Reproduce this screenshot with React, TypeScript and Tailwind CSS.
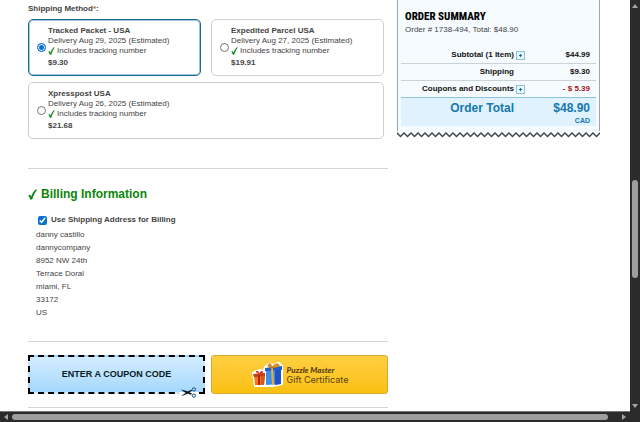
import React, { useState } from 'react';

const SHIPPING_METHODS = [
  { id: 'tracked', name: 'Tracked Packet - USA', delivery: 'Delivery Aug 29, 2025 (Estimated)', price: '$9.30', wide: false },
  { id: 'expedited', name: 'Expedited Parcel USA', delivery: 'Delivery Aug 27, 2025 (Estimated)', price: '$19.91', wide: false },
  { id: 'xpresspost', name: 'Xpresspost USA', delivery: 'Delivery Aug 26, 2025 (Estimated)', price: '$21.68', wide: true },
];

const ADDRESS = ['danny castillo', 'dannycompany', '8952 NW 24th', 'Terrace Doral', 'miami, FL', '33172', 'US'];

const SUMMARY_ROWS = [
  { label: 'Subtotal (1 Item)', value: '$44.99', details: true, discount: false },
  { label: 'Shipping', value: '$9.30', details: false, discount: false },
  { label: 'Coupons and Discounts', value: '- $ 5.39', details: true, discount: true },
];

const Tick: React.FC<{ className: string }> = ({ className }) => (
  <svg viewBox="0 0 10 12" className={className} fill="currentColor" aria-hidden="true">
    <path d="M0.2 7.2 2 6 3.6 8.2C4.8 5 6.6 2 8.6 0.2L10 0.6C7.8 3.6 5.9 7.3 4.6 11.6H2.5C2.1 9.9 1.3 8.4 0.2 7.2Z" />
  </svg>
);

const Scissors: React.FC = () => (
  <svg viewBox="0 0 20 11" className="absolute -bottom-1.5 right-1 h-[11px] w-5" fill="none" aria-hidden="true">
    <path d="M0 5h20v2H0z" fill="#fff" />
    <path d="M2 2.4C6 3 9.5 4.7 13 6.6L12 7.7C8 6.5 4.5 5 2 2.4Z" fill="#0b1a26" />
    <path d="M2 9C6 8.4 9.5 6.5 13.2 3.6L12.2 2.8C8.3 5 4.8 7 2 9Z" fill="#0b1a26" />
    <ellipse cx="14.9" cy="2.4" rx="1.7" ry="1.6" stroke="#1c5277" />
    <ellipse cx="14.9" cy="8.6" rx="1.7" ry="1.6" stroke="#1c5277" />
  </svg>
);

const Gifts: React.FC = () => (
  <svg viewBox="0 0 32 26" className="h-[26px] w-8" aria-hidden="true">
    <path d="M2 11 6 9 9 8 13 9 14 5 18 2 23 3 28 1 31 4 31 22 22 24 14 24 4 24Z" fill="#fff" stroke="#fff" strokeWidth="2" strokeLinejoin="round" />
    <path d="M3 13 14 12 13 23 4 23Z" fill="#ef7a1f" />
    <path d="M2 12 14 11 14 14 3 15Z" fill="#c93d12" />
    <path d="M10 14 14 14 13 23 10 23Z" fill="#d65a17" />
    <path d="M7 13 9 13 9 23 7 23Z" fill="#b91f16" />
    <path d="M8 12C5 11 4 9 6 9S8 11 8 12C9 9 12 8 12 10S9 12 8 12Z" fill="#d52b1a" />
    <path d="M15 7 30 5 30 22 15 23Z" fill="#3c8fe8" />
    <path d="M24 6 30 5 30 22 24 23Z" fill="#2350c5" />
    <path d="M14 6 31 4 31 8 14 9Z" fill="#1f5fcb" />
    <path d="M20 6 22 6 23 23 21 23Z" fill="#f1ad2c" />
    <path d="M21 6C17 6 16 3 18 2S21 4 21 6C22 2 27 1 28 3S24 6 21 6Z" fill="#d99522" stroke="#a8651b" strokeWidth="0.6" />
  </svg>
);

const ShippingMethods: React.FC = () => {
  const [selected, setSelected] = useState('tracked');

  return (
    <fieldset className="mr-1">
      <legend className="pt-1 pb-[5px] text-[8px] leading-[10px] font-bold text-[#444]">
        Shipping Method<span className="text-[#b5651d]">*</span>:
      </legend>
      <div className="grid grid-cols-2 gap-x-2.5 gap-y-1.5">
        {SHIPPING_METHODS.map((method) => (
          <label
            key={method.id}
            className={`flex items-center gap-0.5 rounded-[5px] border py-1.5 pl-2 ${method.wide ? 'col-span-2' : ''} ${
              selected === method.id ? 'border-[#1a6b96] ring-1 ring-inset ring-[#1a6b96]/40' : 'border-[#cfcfcf]'
            }`}
          >
            <input
              type="radio"
              name="shipping"
              checked={selected === method.id}
              onChange={() => setSelected(method.id)}
              className="size-[9px] shrink-0 appearance-none rounded-full border border-[#767676] bg-white checked:border-[#0b72d0] checked:bg-[#0b72d0] checked:shadow-[inset_0_0_0_1px_#fff]"
            />
            <span className="flex flex-col text-[8px] leading-[10px] text-[#444]">
              <span className="font-bold">{method.name}</span>
              <span>{method.delivery}</span>
              <span className="flex items-center gap-0.5">
                <Tick className="h-2 w-[7px] text-[#118a1d]" />
                Includes tracking number
              </span>
              <span className="leading-[13px] font-bold">{method.price}</span>
            </span>
          </label>
        ))}
      </div>
    </fieldset>
  );
};

const BillingInformation: React.FC = () => (
  <section className="mt-[29px] border-t border-[#d5d5d5] pt-[17px]">
    <h2 className="flex items-center gap-1 text-[12px] leading-4 font-bold text-[#0b850b]">
      <Tick className="h-[11px] w-[9px]" />
      Billing Information
    </h2>
    <div className="mt-3 pl-2 text-[#444]">
      <label className="flex items-center gap-1 pl-0.5 text-[8px] leading-3 font-bold">
        <input type="checkbox" defaultChecked className="size-[9px] accent-[#0b72d0]" />
        Use Shipping Address for Billing
      </label>
      <address className="mt-0.5 text-[8px] leading-[13px] not-italic">
        {ADDRESS.map((line) => (
          <p key={line}>{line}</p>
        ))}
      </address>
    </div>
  </section>
);

const Promotions: React.FC = () => (
  <div className="mt-[22px] border-y border-[#d5d5d5] py-[13px]">
    <div className="grid grid-cols-2 gap-1.5">
      <button className="relative h-[39px] border-2 border-dashed border-black bg-linear-to-b from-[#d3edff] to-[#a5d8fc] text-[9px] font-bold text-[#0b1a26]">
        ENTER A COUPON CODE
        <Scissors />
      </button>
      <button className="flex h-[39px] items-center justify-center gap-1 rounded-[3px] border border-[#d9a935] bg-linear-to-b from-[#ffcf40] to-[#fac00a] text-left text-[#5a4110]">
        <Gifts />
        <span className="flex flex-col leading-[10px]">
          <span className="font-['Lato',sans-serif] text-[8px] font-black italic">Puzzle Master</span>
          <span className="font-['Inter',sans-serif] text-[9px]">Gift Certificate</span>
        </span>
      </button>
    </div>
  </div>
);

const OrderSummary: React.FC = () => (
  <aside>
    <div className="border-x border-[#9aa4aa] bg-[#f6fbff] px-[3px] pt-2.5 pb-[5px]">
      <h2 className="pl-1 font-['Roboto_Condensed','Liberation_Sans_Narrow',Roboto,sans-serif] text-[11px] leading-[14px] font-extrabold text-black">ORDER SUMMARY</h2>
      <p className="pl-1 text-[8px] leading-3 text-[#444]">Order # 1738-494, Total: $48.90</p>
      <table className="mt-[11px] w-full border-collapse text-[8px] leading-4 font-bold text-[#111]">
        <tbody>
          {SUMMARY_ROWS.map((row) => (
            <tr key={row.label} className="border-b border-[#c9d3d9] last:border-[#8cc4e0]">
              <th scope="row" className="text-right">{row.label}</th>
              <td className="w-3">
                {row.details && (
                  <button aria-label="Show details" className="ml-0.5 flex size-[9px] items-center justify-center border border-[#8fc3d6] bg-[#e6f5fb]">
                    <svg viewBox="0 0 3 3" className="size-[3px]" aria-hidden="true">
                      <path d="M1.5 0v3M0 1.5h3" stroke="#176f9b" />
                    </svg>
                  </button>
                )}
              </td>
              <td className={`w-[70px] pr-1.5 text-right ${row.discount ? 'text-[#a01818]' : ''}`}>{row.value}</td>
            </tr>
          ))}
        </tbody>
        <tfoot>
          <tr className="bg-[#e0f2fd] align-top text-[#1479ae]">
            <th scope="row" className="pt-0.5 text-right text-[12px]">Order Total</th>
            <td></td>
            <td className="pt-0.5 pr-1.5 text-right text-[12px]">
              {'$48.90'}
              <span className="block text-[7px] leading-[10px]">CAD</span>
            </td>
          </tr>
        </tfoot>
      </table>
    </div>
    {/* torn paper edge */}
    <svg className="block h-[7px] w-full" aria-hidden="true">
      <defs>
        <pattern id="torn" width="7" height="7" patternUnits="userSpaceOnUse">
          <path d="M0 0V2L3.5 5.5 7 2V0Z" fill="#f6fbff" />
          <path d="M-1 1 3.5 5.5 8 1" fill="none" stroke="#3f474c" strokeWidth="1.5" />
        </pattern>
      </defs>
      <rect width="100%" height="7" fill="url(#torn)" />
    </svg>
  </aside>
);

const App: React.FC = () => (
  <div className="grid min-h-screen grid-cols-[1fr_10px] grid-rows-[1fr_10px] bg-[#2b2b2b] font-['Liberation_Sans',Arial,sans-serif]">
    <main className="grid grid-cols-[360fr_203fr] items-start gap-x-[9px] border-b border-[#777] bg-white pr-[30px] pl-7">
      <div>
        <ShippingMethods />
        <BillingInformation />
        <Promotions />
      </div>
      <OrderSummary />
    </main>
    <div className="flex flex-col items-center justify-between py-1">
      <span className="border-x-3 border-b-4 border-x-transparent border-b-[#a5a5a5]" />
      <span className="mt-[46px] h-[98px] w-1.5 rounded-full bg-[#9e9e9e]" />
      <span className="border-x-3 border-t-4 border-x-transparent border-t-[#a5a5a5]" />
    </div>
    <div className="flex items-center gap-1 pl-1">
      <span className="border-y-3 border-r-4 border-y-transparent border-r-[#a5a5a5]" />
      <span className="mr-2.5 h-1.5 grow rounded-full bg-[#9e9e9e]" />
      <span className="mr-1 border-y-3 border-l-4 border-y-transparent border-l-[#a5a5a5]" />
    </div>
  </div>
);

export default App;
